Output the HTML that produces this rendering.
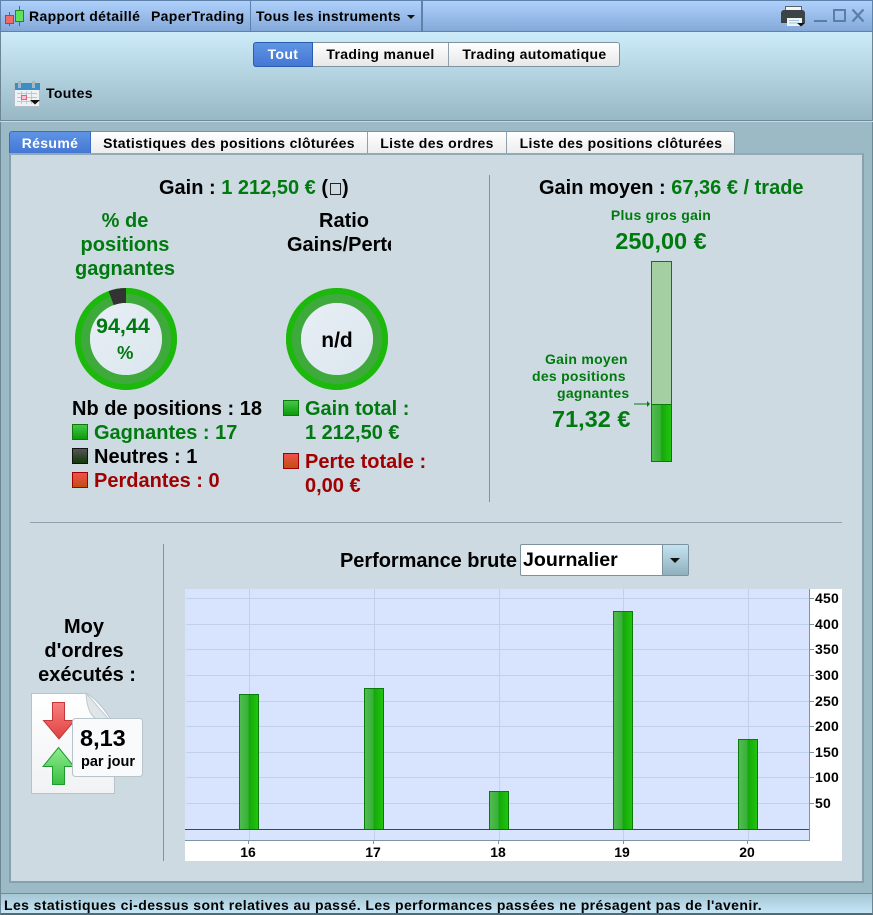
<!DOCTYPE html>
<html><head><meta charset="utf-8"><style>
html,body{margin:0;padding:0;width:873px;height:915px;overflow:hidden;background:#9cb9c6}
body{position:relative;font-family:"Liberation Sans",Arial,sans-serif;font-weight:bold;color:#000}
div{position:absolute;box-sizing:border-box}
.t{white-space:nowrap;line-height:1}
.g{color:#007a0f}
.r{color:#a00000}
.c{text-align:center}
.sm{font-size:14px;letter-spacing:.34px}
.sg{font-size:14px;letter-spacing:.27px}
.b{font-size:20px}
.bar{width:20px;border:1px solid #0b7a0b;background:linear-gradient(90deg,#50bc50 0,#38b038 45%,#14a80a 50%,#22c40f 100%)}
.v{top:589px;width:1px;height:251px;background:#c2cfe8}
.h{left:186px;width:623px;height:1px;background:#c2cfe8}
.yl{left:815px;font-size:14px;letter-spacing:.2px;width:30px}
.tk{left:809px;width:5px;height:1px;background:#7f94a3}
.xl{top:845px;font-size:14px;width:30px;text-align:center}
.xk{top:840px;width:1px;height:4px;background:#7f94a3}
.sq{width:16px;height:16px;border:1px solid}
</style></head><body>
<div style="left:0;top:0;width:873px;height:32px;background:linear-gradient(#aed0fb,#84a9d9);border:1px solid #5f82ab"></div>
<div style="left:250px;top:1px;width:1px;height:30px;background:#5f82ab"></div>
<div style="left:421px;top:1px;width:2px;height:30px;background:#5f82ab"></div>
<svg style="position:absolute;left:0;top:0" width="28" height="30"><path d="M9.500 12v14M19.500 6v20" stroke="#2a8a2a"/><rect x="5.500" y="15.500" width="8" height="8" fill="#ef6a6a" stroke="#a04848"/><rect x="15.500" y="10.500" width="8" height="11" fill="#5fe35f" stroke="#1f8a1f"/></svg>
<div class="t sm" style="left:29px;top:9px">Rapport détaillé</div>
<div class="t sm" style="left:151px;top:9px">PaperTrading</div>
<div class="t sm" style="left:256px;top:9px;letter-spacing:.25px">Tous les instruments</div>
<svg style="position:absolute;left:407px;top:15px" width="9" height="5"><path d="M0 0h8l-4 4z" fill="#111"/></svg>
<svg style="position:absolute;left:781px;top:5px" width="26" height="23"><rect x="4.500" y="1.500" width="16" height="7" fill="#f2f5f8" stroke="#5a6268"/><path d="M3 5h18a3 3 0 0 1 3 3v10H0V8a3 3 0 0 1 3-3z" fill="#3c4347"/><rect x="6" y="13" width="15" height="8" fill="#eef3f6"/><path d="M8 15.500h10M8 18h10" stroke="#a9c4d4"/><path d="M16 18h8l-4 3.500z" fill="#111"/></svg>
<div style="left:814px;top:20px;width:13px;height:2px;background:#5a7ea6"></div>
<div style="left:833px;top:9px;width:13px;height:13px;border:2px solid #5a7ea6"></div>
<svg style="position:absolute;left:851px;top:8px" width="15" height="15"><path d="M1.500 1.500l11 12M12.500 1.500l-11 12" stroke="#5a7ea6" stroke-width="2.200"/></svg>

<div style="left:0;top:32px;width:873px;height:89px;background:linear-gradient(#cdecfa,#98b8c6);border-left:1px solid #6b8796;border-right:1px solid #6b8796;border-bottom:1px solid #6f8b99"></div>
<div style="left:0;top:121px;width:873px;height:1px;background:#c5dbe4"></div>
<div style="left:0;top:122px;width:1px;height:793px;background:#6b8796"></div>
<div style="left:872px;top:122px;width:1px;height:793px;background:#6b8796"></div>

<div style="left:253px;top:42px;width:60px;height:25px;background:linear-gradient(#5f94e4,#4478d4);border:1px solid #2a5cb0;border-radius:3px 0 0 3px"></div>
<div style="left:313px;top:42px;width:307px;height:25px;background:linear-gradient(#fff,#e8e8e8);border:1px solid #7d929e;border-left:0;border-radius:0 3px 3px 0"></div>
<div style="left:448px;top:43px;width:1px;height:23px;background:#8ea0ab"></div>
<div class="t sm c" style="left:253px;top:47px;width:60px;color:#fff">Tout</div>
<div class="t sm c" style="left:313px;top:47px;width:135px">Trading manuel</div>
<div class="t sm c" style="left:449px;top:47px;width:171px">Trading automatique</div>

<svg style="position:absolute;left:14px;top:81px" width="27" height="27"><rect x="0.500" y="2.500" width="25" height="23" fill="#eef2f5" stroke="#b4bec4"/><rect x="1" y="2" width="25" height="7" fill="#3c8fc4"/><rect x="4" y="0" width="3" height="7" fill="#a9b6bd"/><rect x="18" y="0" width="3" height="7" fill="#a9b6bd"/><path d="M3 12.500h20M3 16.500h20M3 20.500h20M7.500 10v13M12.500 10v13M17.500 10v13" stroke="#b8c8d6" stroke-width=".9"/><rect x="7.500" y="14.500" width="5" height="4" fill="#fbd" stroke="#e86464"/><path d="M16 19h10l-5 4.500z" fill="#111"/></svg>
<div class="t sm" style="left:46px;top:86px">Toutes</div>

<div style="left:9px;top:131px;width:82px;height:23px;background:linear-gradient(#5f94e4,#4478d4);border:1px solid #3a6cc0;border-radius:3px 0 0 0"></div>
<div style="left:91px;top:131px;width:644px;height:23px;background:linear-gradient(#fff,#ececec);border:1px solid #7d929e;border-left:0;border-bottom:0;border-radius:0 3px 0 0"></div>
<div style="left:367px;top:132px;width:1px;height:21px;background:#8ea0ab"></div>
<div style="left:506px;top:132px;width:1px;height:21px;background:#8ea0ab"></div>
<div class="t sm c" style="left:9px;top:136px;width:82px;color:#fff">Résumé</div>
<div class="t sm c" style="left:91px;top:136px;width:276px">Statistiques des positions clôturées</div>
<div class="t sm c" style="left:368px;top:136px;width:138px">Liste des ordres</div>
<div class="t sm c" style="left:507px;top:136px;width:228px">Liste des positions clôturées</div>

<div style="left:9px;top:153px;width:855px;height:730px;background:#cddae2;border:2px solid #86a0ad;border-top-color:#90aab6"></div>

<div class="t b" style="left:159px;top:178px">Gain : <span class="g">1 212,50 €</span> (<span style="display:inline-block;width:11px;height:12px;border:1px solid #222;vertical-align:-1px;margin:0 1px 0 2px;box-sizing:border-box"></span>)</div>
<div class="t b c g" style="left:60px;top:209px;width:130px;line-height:24px">% de<br>positions<br>gagnantes</div>
<div class="t b" style="left:319px;top:211px">Ratio</div>
<div class="t b" style="left:287px;top:235px;width:104px;overflow:hidden;line-height:20px">Gains/Pertes</div>

<svg style="position:absolute;left:70px;top:283px" width="112" height="112">
<defs><linearGradient id="i" x1="0" y1="0" x2="1" y2="1"><stop offset="0" stop-color="#e8eff5"/><stop offset="1" stop-color="#dbe6ee"/></linearGradient></defs>
<circle cx="56" cy="56" r="43.500" fill="none" stroke="#3faa3c" stroke-width="15"/>
<circle cx="56" cy="56" r="48" fill="none" stroke="#1cb80c" stroke-width="6"/>
<path d="M56 5A51 51 0 0 0 38.600 8.100L43.700 22.200A36 36 0 0 1 56 20Z" fill="#333"/>
<circle cx="56" cy="56" r="36" fill="url(#i)"/>
</svg>
<div class="t g" style="left:96px;top:316px;font-size:21.500px">94,44</div>
<div class="t g" style="left:117px;top:344px;font-size:18.500px">%</div>
<svg style="position:absolute;left:281px;top:283px" width="112" height="112">
<circle cx="56" cy="56" r="43.500" fill="none" stroke="#3faa3c" stroke-width="15"/>
<circle cx="56" cy="56" r="48" fill="none" stroke="#1cb80c" stroke-width="6"/>
<circle cx="56" cy="56" r="36" fill="url(#i)"/>
</svg>
<div class="t c" style="left:287px;top:330px;width:100px;font-size:21px">n/d</div>

<div class="t b" style="left:72px;top:399px">Nb de positions : 18</div>
<div class="sq" style="left:72px;top:424px;background:linear-gradient(#45c845,#0c9a0c);border-color:#0b7a0b"></div>
<div class="t b g" style="left:94px;top:423px">Gagnantes : 17</div>
<div class="sq" style="left:72px;top:448px;background:linear-gradient(#555,#123a0a);border-color:#111"></div>
<div class="t b" style="left:94px;top:447px">Neutres : 1</div>
<div class="sq" style="left:72px;top:472px;background:linear-gradient(#f05050,#c05010);border-color:#a00000"></div>
<div class="t b r" style="left:94px;top:471px">Perdantes : 0</div>

<div class="sq" style="left:283px;top:400px;background:linear-gradient(#45c845,#0c9a0c);border-color:#0b7a0b"></div>
<div class="t b g" style="left:305px;top:399px">Gain total :</div>
<div class="t b g" style="left:305px;top:423px">1 212,50 €</div>
<div class="sq" style="left:283px;top:453px;background:linear-gradient(#f05050,#c05010);border-color:#a00000"></div>
<div class="t b r" style="left:305px;top:452px">Perte totale :</div>
<div class="t b r" style="left:305px;top:476px">0,00 €</div>

<div style="left:489px;top:175px;width:1px;height:327px;background:#7f949f"></div>
<div class="t b" style="left:539px;top:178px">Gain moyen : <span class="g">67,36 € / trade</span></div>
<div class="t sg g c" style="left:581px;top:208px;width:160px">Plus gros gain</div>
<div class="t g c" style="left:581px;top:230px;width:160px;font-size:23.500px">250,00 €</div>
<div style="left:651px;top:261px;width:21px;height:144px;background:#a3cfa3;border:1px solid #0b7a0b"></div>
<div class="bar" style="left:651px;top:404px;height:58px;width:21px"></div>
<div class="t sg g" style="left:545px;top:352px">Gain moyen</div>
<div class="t sg g" style="left:532px;top:369px">des positions</div>
<div class="t sg g" style="left:557px;top:386px">gagnantes</div>
<svg style="position:absolute;left:634px;top:400px" width="17" height="8"><path d="M0 4h15" stroke="#0b7a0b"/><path d="M13 1v6l3-3z" fill="#0b7a0b"/></svg>
<div class="t g" style="left:552px;top:408px;font-size:23.500px">71,32 €</div>

<div style="left:30px;top:522px;width:812px;height:1px;background:#8ea0ab"></div>
<div style="left:163px;top:544px;width:1px;height:317px;background:#7f949f"></div>

<div class="b c" style="left:31px;top:615px;width:108px;line-height:24px"><span style="position:relative;left:-1px">Moy</span><br><span style="position:relative;left:-1px">d'ordres</span><br><span style="position:relative;left:2px">exécutés :</span></div>
<svg style="position:absolute;left:30px;top:691px" width="115" height="106">
<defs>
<linearGradient id="ra" x1="0" y1="0" x2="0" y2="1"><stop offset="0" stop-color="#f88080"/><stop offset="1" stop-color="#e04040"/></linearGradient>
<linearGradient id="ga" x1="0" y1="0" x2="0" y2="1"><stop offset="0" stop-color="#90ec90"/><stop offset="1" stop-color="#38c040"/></linearGradient>
<linearGradient id="pg" x1="0" y1="0" x2="0" y2="1"><stop offset="0" stop-color="#fff"/><stop offset="1" stop-color="#f0f2f4"/></linearGradient>
</defs>
<path d="M1.500 2.500H57C66 8 76 20 84.500 34V102.500H1.500Z" fill="url(#pg)" stroke="#b8c2c8"/>
<path d="M56 2.500C57 18 60 32 84.500 34C72 22 64 10 56 2.500Z" fill="#dfe6ea" stroke="#c0c8ce"/>
<path d="M22.500 11.500h12v18h10l-15.500 18.500-15.500-18.500h9Z" fill="url(#ra)" stroke="#c23838"/>
<path d="M28.500 56.500 44 75.500H34.500V93.500H22.500V75.500H13Z" fill="url(#ga)" stroke="#1f9a2f"/>
<rect x="42.500" y="27.500" width="70" height="58" rx="3" fill="#f8fafb" stroke="#b8c4cc"/>
</svg>
<div class="t" style="left:80px;top:727px;font-size:23.500px">8,13</div>
<div class="t" style="left:81px;top:755px;font-size:14.500px">par jour</div>

<div class="t b" style="left:340px;top:551px;letter-spacing:-.05px">Performance brute</div>
<div style="left:520px;top:544px;width:169px;height:32px;background:#fff;border:1px solid #7d929e;border-radius:2px"></div>
<div style="left:662px;top:545px;width:26px;height:30px;background:linear-gradient(#c4e4f2,#8fafbd);border-left:1px solid #7d929e"></div>
<svg style="position:absolute;left:670px;top:558px" width="11" height="6"><path d="M0 0h10l-5 5z" fill="#111"/></svg>
<div class="t" style="left:523px;top:551px;font-size:19.600px">Journalier</div>

<div style="left:185px;top:589px;width:657px;height:272px;background:#fff"></div>
<div style="left:185px;top:589px;width:624px;height:251px;background:#d8e4fd"></div>
<div class="v" style="left:249px"></div><div class="v" style="left:374px"></div><div class="v" style="left:499px"></div><div class="v" style="left:623px"></div><div class="v" style="left:748px"></div>
<div class="h" style="top:598px"></div><div class="h" style="top:624px"></div><div class="h" style="top:649px"></div><div class="h" style="top:675px"></div><div class="h" style="top:701px"></div><div class="h" style="top:726px"></div><div class="h" style="top:752px"></div><div class="h" style="top:777px"></div><div class="h" style="top:803px"></div>
<div class="bar" style="left:239px;top:694px;height:136px"></div>
<div class="bar" style="left:364px;top:688px;height:142px"></div>
<div class="bar" style="left:489px;top:791px;height:39px"></div>
<div class="bar" style="left:613px;top:611px;height:219px"></div>
<div class="bar" style="left:738px;top:739px;height:91px"></div>
<div style="left:185px;top:829px;width:624px;height:1px;background:#2b3cb8"></div>
<div style="left:809px;top:589px;width:1px;height:252px;background:#7f94a3"></div>
<div style="left:185px;top:840px;width:625px;height:1px;background:#7f94a3"></div>
<div class="tk" style="top:598px"></div><div class="t yl" style="top:591px">450</div>
<div class="tk" style="top:624px"></div><div class="t yl" style="top:617px">400</div>
<div class="tk" style="top:649px"></div><div class="t yl" style="top:642px">350</div>
<div class="tk" style="top:675px"></div><div class="t yl" style="top:668px">300</div>
<div class="tk" style="top:701px"></div><div class="t yl" style="top:694px">250</div>
<div class="tk" style="top:726px"></div><div class="t yl" style="top:719px">200</div>
<div class="tk" style="top:752px"></div><div class="t yl" style="top:745px">150</div>
<div class="tk" style="top:777px"></div><div class="t yl" style="top:770px">100</div>
<div class="tk" style="top:803px"></div><div class="t yl" style="top:796px">50</div>
<div class="xk" style="left:248px"></div><div class="t xl" style="left:233px">16</div>
<div class="xk" style="left:373px"></div><div class="t xl" style="left:358px">17</div>
<div class="xk" style="left:498px"></div><div class="t xl" style="left:483px">18</div>
<div class="xk" style="left:623px"></div><div class="t xl" style="left:607px">19</div>
<div class="xk" style="left:747px"></div><div class="t xl" style="left:732px">20</div>

<div style="left:0;top:893px;width:873px;height:22px;background:linear-gradient(#a6c6d4,#c4e6f6);border:1px solid #6b8796;border-top:1px solid #6f8b99;border-bottom:2px solid #4f6b7a"></div>
<div class="t" style="left:4px;top:898px;font-size:14px;letter-spacing:.41px">Les statistiques ci-dessus sont relatives au passé. Les performances passées ne présagent pas de l'avenir.</div>
</body></html>
